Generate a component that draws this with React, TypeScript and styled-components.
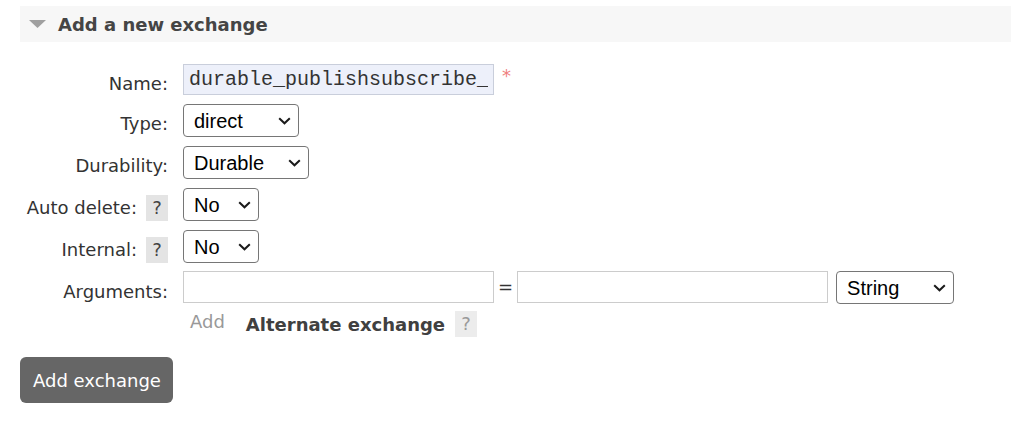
import React from "react";
import styled, { createGlobalStyle } from "styled-components";

const Global = createGlobalStyle`
  html, body { margin: 0; padding: 0; background: #fff; }
  body { font-family: "DejaVu Sans", Verdana, sans-serif; font-size: 18px; color: #333; }
`;

const Page = styled.div`
  padding: 6px 0 0 20px;
`;

const SectionHeader = styled.div`
  height: 36px;
  background: #f7f7f7;
  display: flex;
  align-items: center;
  gap: 12px;
  padding-left: 9px;
`;

const Title = styled.h2`
  margin: 0;
  font-size: 18px;
  font-weight: bold;
  color: #454545;
  line-height: 21px;
`;

const Form = styled.div`
  margin-top: 22px;
  display: grid;
  grid-template-columns: 148px auto;
  column-gap: 15px;
  row-gap: 9px;
  align-items: start;
`;

const Label = styled.div`
  box-sizing: border-box;
  height: 31px;
  display: flex;
  justify-content: flex-end;
  align-items: center;
  gap: 9px;
  padding-top: 8px;
  line-height: 21px;
  color: #333;
  white-space: nowrap;
`;

const Help = styled.span<{ $faint?: boolean }>`
  display: inline-block;
  flex: none;
  width: 22px;
  height: 26px;
  line-height: 26px;
  text-align: center;
  background: ${(p) => (p.$faint ? "#ececec" : "#e4e4e4")};
  color: ${(p) => (p.$faint ? "#9a9a9a" : "#444")};
  font-size: 18px;
`;

const Field = styled.div`
  display: flex;
  align-items: flex-start;
`;

const NameInput = styled.input`
  box-sizing: border-box;
  width: 311px;
  height: 31px;
  border: 1px solid #c9cedb;
  background: #edf0fa;
  font-family: "Liberation Mono", "Courier New", monospace;
  font-size: 20px;
  color: #333;
  padding: 0 5px;
  outline: none;
`;

const Required = styled.span`
  color: #f07f7f;
  font-size: 18px;
  margin-left: 8px;
  line-height: 18px;
  margin-top: 3px;
`;

const SelectWrap = styled.div<{ $w: number }>`
  position: relative;
  width: ${(p) => p.$w}px;
  height: 33px;
`;

const Select = styled.select`
  appearance: none;
  -webkit-appearance: none;
  box-sizing: border-box;
  width: 100%;
  height: 100%;
  border: 1px solid #767676;
  border-radius: 4px;
  background: #fff;
  font-family: "Liberation Sans", Arial, sans-serif;
  font-size: 20px;
  color: #000;
  padding: 0 0 0 10px;
  outline: none;
`;

const Chevron = styled.svg`
  position: absolute;
  right: 8px;
  top: 13px;
  pointer-events: none;
`;

const ArgInput = styled.input`
  box-sizing: border-box;
  width: 311px;
  height: 32px;
  border: 1px solid #cccccc;
  background: #fff;
  outline: none;
`;

const Equals = styled.span`
  margin: 0 4px;
  line-height: 32px;
  color: #333;
`;

const TypeGap = styled.span`
  width: 8px;
`;

const ArgCell = styled.div`
  display: flex;
  flex-direction: column;
  gap: 7px;
  margin-top: -1px;
`;

const ArgRow = styled.div`
  display: flex;
  align-items: flex-start;
`;

const Shortcuts = styled.div`
  display: flex;
  align-items: center;
  height: 26px;
  padding-left: 7px;
`;

const AddLink = styled.span`
  color: #999;
  align-self: flex-start;
  line-height: 21px;
  margin-right: 21px;
`;

const AltLink = styled.span`
  font-weight: bold;
  color: #404040;
  margin-right: 10px;
`;

const SubmitButton = styled.button`
  margin-top: 20px;
  height: 46px;
  padding: 0 12px 0 13px;
  background: #666;
  color: #fff;
  border: none;
  border-radius: 6px;
  font-family: "DejaVu Sans", Verdana, sans-serif;
  font-size: 18px;
  cursor: pointer;
`;

const Dropdown: React.FC<{ width: number; options: string[]; value: string }> = ({ width, options, value }) => (
  <SelectWrap $w={width}>
    <Select defaultValue={value}>
      {options.map((o) => (
        <option key={o}>{o}</option>
      ))}
    </Select>
    <Chevron width="13" height="8" viewBox="0 0 13 8">
      <polyline points="1.2,1.2 6.5,6.3 11.8,1.2" fill="none" stroke="#1a1a1a" strokeWidth="2" />
    </Chevron>
  </SelectWrap>
);

export default function App() {
  return (
    <>
      <Global />
      <Page>
        <SectionHeader>
          <svg width="17" height="8" viewBox="0 0 17 8">
            <polygon points="0,0 17,0 8.5,8" fill="#a0a0a0" />
          </svg>
          <Title>Add a new exchange</Title>
        </SectionHeader>

        <Form>
          <Label>Name:</Label>
          <Field>
            <NameInput defaultValue="durable_publishsubscribe_exchange" />
            <Required>*</Required>
          </Field>

          <Label>Type:</Label>
          <Field>
            <Dropdown width={116} value="direct" options={["direct", "fanout", "headers", "topic"]} />
          </Field>

          <Label>Durability:</Label>
          <Field>
            <Dropdown width={126} value="Durable" options={["Durable", "Transient"]} />
          </Field>

          <Label>
            Auto delete: <Help>?</Help>
          </Label>
          <Field>
            <Dropdown width={76} value="No" options={["No", "Yes"]} />
          </Field>

          <Label>
            Internal: <Help>?</Help>
          </Label>
          <Field>
            <Dropdown width={76} value="No" options={["No", "Yes"]} />
          </Field>

          <Label>Arguments:</Label>
          <ArgCell>
            <ArgRow>
              <ArgInput />
              <Equals>=</Equals>
              <ArgInput />
              <TypeGap />
              <Dropdown width={118} value="String" options={["String", "Number", "Boolean", "List"]} />
            </ArgRow>
            <Shortcuts>
              <AddLink>Add</AddLink>
              <AltLink>Alternate exchange</AltLink>
              <Help $faint>?</Help>
            </Shortcuts>
          </ArgCell>
        </Form>

        <SubmitButton>Add exchange</SubmitButton>
      </Page>
    </>
  );
}
